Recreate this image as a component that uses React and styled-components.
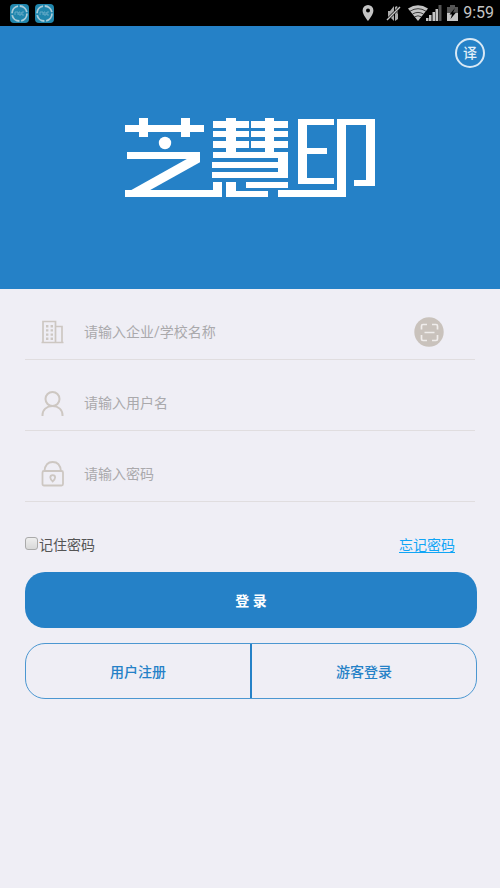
import React from "react";
import styled, { createGlobalStyle } from "styled-components";

const GlobalStyle = createGlobalStyle`
  * { box-sizing: border-box; }
  html { background: #efeef5; }
  body {
    margin: 0;
    font-family: Roboto, "Noto Sans CJK SC", sans-serif;
    font-size: 14px;
    color: #555;
  }
  button, input { font: inherit; }
  svg { display: block; flex: none; }
`;

const StatusBar = styled.header`
  display: flex;
  align-items: center;
  justify-content: space-between;
  height: 26px;
  padding: 0 6px 0 10px;
  background: #000;
  color: #c4c4c4;
`;

const StatusGroup = styled.div`
  display: flex;
  align-items: center;
  gap: ${(p) => p.$gap}px;
`;

const Clock = styled.time`
  font-size: 16px;
  line-height: 26px;
`;

const Hero = styled.section`
  display: flex;
  flex-direction: column;
  align-items: center;
  padding: 12px 15px 92px;
  background: #2581c7;
`;

const TranslateButton = styled.button`
  align-self: flex-end;
  width: 30px;
  height: 30px;
  margin-bottom: 50px;
  padding: 0;
  border: 2px solid #d8e8f5;
  border-radius: 50%;
  background: transparent;
  color: #e4f0f9;
  font-weight: 500;
  line-height: 24px;
`;

const Form = styled.form`
  padding: 0 23px 0 25px;
`;

const Field = styled.div`
  display: flex;
  align-items: center;
  height: 71px;
  margin-right: 2px;
  padding: 16px 31px 0 16px;
  border-bottom: 1px solid #e0dddf;
`;

const TextInput = styled.input`
  flex: 1;
  min-width: 0;
  margin-left: 20px;
  padding: 0;
  border: 0;
  outline: 0;
  background: transparent;
  color: #555;
  line-height: 24px;
  &::placeholder { color: #aaa9ac; opacity: 1; }
`;

const ScanButton = styled.button`
  padding: 0;
  border: 0;
  background: transparent;
`;

const Options = styled.div`
  display: flex;
  align-items: center;
  justify-content: space-between;
  padding: 31px 22px 15px 0;
  line-height: 24px;
`;

const Remember = styled.label`
  display: flex;
  align-items: center;
  gap: 1px;
`;

const Checkbox = styled.input`
  appearance: none;
  width: 13px;
  height: 13px;
  margin: 0 0 3px;
  border: 1px solid #aaa;
  border-radius: 3px;
  background: linear-gradient(#eee, #d8d8d8);
  &:checked { background: #2581c7; }
`;

const ForgotLink = styled.a`
  color: #10a5f5;
  text-underline-offset: 2px;
`;

const LoginButton = styled.button`
  width: 100%;
  height: 56px;
  border: 0;
  border-radius: 20px;
  background: #2581c7;
  color: #fff;
  font-weight: 700;
`;

const SplitButtons = styled.div`
  display: flex;
  height: 56px;
  margin-top: 15px;
  border: 1px solid #4b97d1;
  border-radius: 20px;
`;

const SplitButton = styled.button`
  flex: 1;
  padding: 0;
  border: 0;
  background: transparent;
  color: #2581c7;
  font-weight: 500;
  & + & { border-left: 2px solid #2581c7; }
`;

const AppBadge = () => (
  <svg width="19" height="19" viewBox="0 0 19 19" aria-hidden="true">
    <rect width="19" height="19" rx="4" fill="#2086ad" />
    <circle cx="9.5" cy="9.5" r="7.5" fill="none" stroke="#a9cbd8" strokeWidth="1.8" strokeDasharray="10 1.8" />
    <path d="M5 11V8h3v3M10 8h-1v3h2V8M14 8h-2v3h2" fill="none" stroke="#73b3cd" strokeWidth="0.8" />
  </svg>
);

const PinIcon = () => (
  <svg width="12" height="18" viewBox="0 0 12 18" fill="currentColor" aria-hidden="true">
    <path fillRule="evenodd" d="M6 1a5.4 5.4 0 0 0-5.4 5.4C.6 10.500 6 17 6 17s5.400-6.500 5.400-10.600A5.400 5.400 0 0 0 6 1zm0 3.500a2 2 0 1 1 0 4 2 2 0 0 1 0-4z" />
  </svg>
);

const MuteIcon = () => (
  <svg width="15" height="18" viewBox="0 0 15 18" aria-hidden="true">
    <path d="M2 7h2l4-5v15l-4-4H2zM9 3l2-1q2 4 0 8l-2 2zM9 12l3-3v6l-3 2z" fill="#aaa" />
    <path d="M1 16L14 3" stroke="#000" strokeWidth="2.600" />
    <path d="M1 16L14 3" stroke="currentColor" strokeWidth="1.400" />
  </svg>
);

const NetworkIcon = () => (
  <svg width="34" height="18" viewBox="0 0 34 18" aria-hidden="true">
    <path d="M0 4.500Q10 -2 20 4.500L10 17z" fill="currentColor" />
    <path d="M2 7.200Q10 2.200 18 7.200M4.500 10Q10 6.800 15.500 10M6.500 12.800Q10 10.800 13.500 12.800" fill="none" stroke="#000" strokeWidth="0.700" />
    <path d="M18 17v-3h2.500v3zM21 17v-6h2.500v6zM24.500 17V8H27v9z" fill="currentColor" />
    <path d="M27.500 17V5H30v12z" fill="currentColor" />
    <path d="M30.500 17V1h3v16z" fill="#555" />
  </svg>
);

const BatteryIcon = () => (
  <svg width="11" height="18" viewBox="0 0 11 18" aria-hidden="true">
    <path d="M0 3h3V1h5v2h3v6H0z" fill="#555" />
    <path d="M0 9h11v8H0z" fill="currentColor" />
    <path d="M8 4L2.500 10.500H5L3.500 15 9 8.500H6z" fill="#000" />
  </svg>
);

const BRAND_BARS = [
  [0, 7, 79, 7], [14, 0, 9, 19], [56, 0, 9, 19], [2, 34, 73, 7],
  [0, 72, 97, 7], [88, 64, 9, 15],
  [88, 3, 36, 7], [88, 13, 36, 6], [88, 23, 36, 7], [101, 0, 10, 35],
  [126, 3, 37, 7], [126, 13, 37, 6], [126, 23, 37, 7], [140, 0, 9, 35],
  [88, 34, 75, 6], [87, 44, 67, 6], [87, 54, 76, 6], [153, 34, 10, 26],
  [101, 64, 10, 15], [101, 73, 42, 6], [121, 64, 42, 6], [153, 72, 68, 7],
  [173, 1, 9, 65], [173, 1, 36, 6], [173, 30, 29, 6], [173, 60, 36, 6],
  [212, 1, 9, 78], [212, 1, 38, 6], [241, 1, 9, 67], [229, 62, 21, 6],
];

const BrandLogo = () => (
  <svg width="250" height="79" viewBox="0 0 250 79" fill="#fff" role="img" aria-label="芝慧印">
    {BRAND_BARS.map(([x, y, width, height], i) => (
      <rect key={i} x={x} y={y} width={width} height={height} />
    ))}
    <circle cx="40" cy="25" r="6.200" />
    <svg x="0" y="36" width="75" height="38" viewBox="0 36 75 38">
      <line x1="-3" y1="82.500" x2="90" y2="30.500" stroke="#fff" strokeWidth="9.200" />
    </svg>
  </svg>
);

const BuildingIcon = () => (
  <svg width="23" height="24" viewBox="0 0 23 24" fill="none" stroke="#cdc7c2" strokeWidth="1.700" aria-hidden="true">
    <path d="M2 22.500V1.500h12.500v21M14.500 6.500H21v16M0.500 22.500h22" />
    <path d="M6.200 5v16M10.800 5v16" strokeWidth="2.400" strokeDasharray="2.400 1.800" />
  </svg>
);

const UserIcon = () => (
  <svg width="23" height="25" viewBox="0 0 23 25" fill="none" stroke="#cdc7c2" strokeWidth="2" aria-hidden="true">
    <circle cx="11.500" cy="8" r="7" />
    <path d="M1.500 25v-1c0-5 4-9 10-9s10 4 10 9v1" />
  </svg>
);

const LockIcon = () => (
  <svg width="23" height="26" viewBox="0 0 23 26" fill="none" stroke="#cdc7c2" strokeWidth="1.800" aria-hidden="true">
    <rect x="1.500" y="10" width="20.500" height="14.500" rx="1.500" />
    <path d="M3.500 10C4 4.500 7 1 11.700 1s7.700 3.500 8.200 9" />
    <path d="M11.700 20.500q-2.400-2.500-2.400-4a2.400 2.400 0 0 1 4.800 0q0 1.500-2.400 4z" />
  </svg>
);

const ScanIcon = () => (
  <svg width="30" height="30" viewBox="0 0 30 30" aria-hidden="true">
    <circle cx="15" cy="15" r="14.700" fill="#c9c2bc" />
    <path d="M13 7.500H9Q7.500 7.500 7.500 9v3.500M18 7.500h4Q23.500 7.500 23.500 9v3.500M7.500 18v4q0 1.500 1.500 1.500h4M23.500 18v4q0 1.500-1.500 1.500h-4M10.500 15.500h10" fill="none" stroke="#f0edec" strokeWidth="1.700" />
  </svg>
);

export default function App() {
  return (
    <>
      <GlobalStyle />
      <StatusBar>
        <StatusGroup $gap={6}>
          <AppBadge />
          <AppBadge />
        </StatusGroup>
        <StatusGroup $gap={12}>
          <PinIcon />
          <StatusGroup $gap={7}>
            <MuteIcon />
            <StatusGroup $gap={5}>
              <NetworkIcon />
              <BatteryIcon />
              <Clock>9:59</Clock>
            </StatusGroup>
          </StatusGroup>
        </StatusGroup>
      </StatusBar>
      <main>
        <Hero>
          <TranslateButton type="button">译</TranslateButton>
          <BrandLogo />
        </Hero>
        <Form onSubmit={(e) => e.preventDefault()}>
          <Field>
            <BuildingIcon />
            <TextInput type="text" aria-label="企业/学校名称" placeholder="请输入企业/学校名称" />
            <ScanButton type="button" aria-label="扫码">
              <ScanIcon />
            </ScanButton>
          </Field>
          <Field>
            <UserIcon />
            <TextInput type="text" aria-label="用户名" placeholder="请输入用户名" />
          </Field>
          <Field>
            <LockIcon />
            <TextInput type="password" aria-label="密码" placeholder="请输入密码" />
          </Field>
          <Options>
            <Remember>
              <Checkbox type="checkbox" />
              记住密码
            </Remember>
            <ForgotLink href="#forgot">忘记密码</ForgotLink>
          </Options>
          <LoginButton type="submit">登 录</LoginButton>
          <SplitButtons>
            <SplitButton type="button">用户注册</SplitButton>
            <SplitButton type="button">游客登录</SplitButton>
          </SplitButtons>
        </Form>
      </main>
    </>
  );
}
